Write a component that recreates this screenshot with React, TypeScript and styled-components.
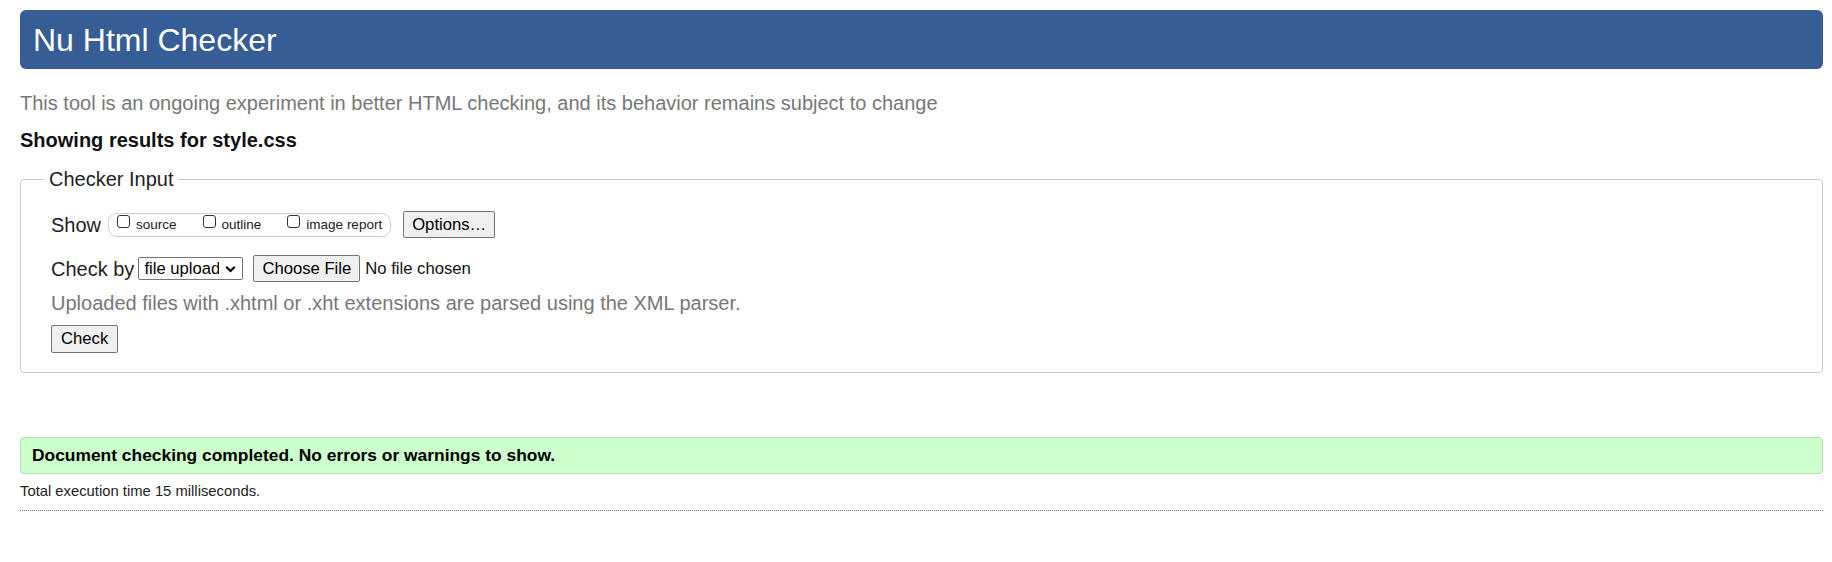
import React from "react";
import styled, { createGlobalStyle } from "styled-components";

const Global = createGlobalStyle`
  html, body { background: #fff; }
  body {
    margin: 10px 9px 0 20px;
    font-family: "Liberation Sans", Arial, sans-serif;
    color: #222;
  }
  * { box-sizing: border-box; }
`;

const Header = styled.h1`
  margin: 0;
  height: 59px;
  padding: 2px 13px 0;
  line-height: 57px;
  font-size: 32px;
  font-weight: 400;
  color: #fff;
  background: #365d95;
  border-radius: 6px;
`;

const Subtitle = styled.p`
  margin: 22px 0 0;
  font-size: 20px;
  line-height: 24px;
  color: #777;
`;

const Results = styled.h2`
  margin: 13px 0 0;
  font-size: 20px;
  line-height: 24px;
  font-weight: 700;
  color: #111;
`;

const Fieldset = styled.fieldset`
  margin: 15px 0 0;
  padding: 0 23px 19px;
  border: 1px solid #c8c8c8;
  border-radius: 4px;
`;

const Legend = styled.legend`
  padding: 0 4px 0 5px;
  font-size: 20px;
  line-height: 24px;
  color: #222;
`;

const Rows = styled.div`
  display: flex;
  flex-direction: column;
  align-items: flex-start;
  padding-left: 7px;
  padding-top: 20px;
`;

const Row = styled.div<{ $top?: number }>`
  display: flex;
  align-items: center;
  height: 27px;
  margin-top: ${(p) => p.$top ?? 0}px;
`;

const Label = styled.span<{ $gap: number }>`
  font-size: 20px;
  line-height: 24px;
  margin-right: ${(p) => p.$gap}px;
  color: #222;
`;

const ShowGroup = styled.div`
  display: inline-flex;
  align-items: center;
  gap: 26px;
  height: 24px;
  padding: 0 8px;
  border: 1px solid #cfcfcf;
  border-radius: 9px;
  margin-right: 12px;
`;

const CheckItem = styled.label`
  display: inline-flex;
  align-items: center;
  gap: 6px;
  font-size: 13.5px;
  line-height: 16px;
  color: #222;
`;

const Box = styled.input`
  appearance: none;
  width: 13px;
  height: 13px;
  margin: 0 0 6px;
  border: 1px solid #333;
  border-radius: 3px;
  background: #fff;
`;

const Button = styled.button`
  height: 27px;
  padding: 0 8px;
  font-family: "Liberation Sans", Arial, sans-serif;
  font-size: 16.67px;
  line-height: 20px;
  color: #000;
  background: #efefef;
  border: 1px solid #767676;
  border-radius: 2px;
`;

const SelectBox = styled.div`
  display: inline-flex;
  align-items: center;
  gap: 6px;
  width: 105px;
  height: 23px;
  padding: 0 6px 0 5px;
  border: 1px solid #767676;
  border-radius: 2px;
  background: #fff;
  margin-right: 10px;
`;

const Select = styled.select`
  appearance: none;
  border: 0;
  padding: 0;
  margin: 0;
  background: transparent;
  font-family: "Liberation Sans", Arial, sans-serif;
  font-size: 16.67px;
  line-height: 20px;
  color: #000;
  flex: 1;
  min-width: 0;
  outline: none;
`;

const FileName = styled.span`
  margin-left: 5px;
  font-size: 16.67px;
  line-height: 20px;
  color: #111;
`;

const Note = styled.p`
  margin: 9px 0 0;
  font-size: 20px;
  line-height: 24px;
  color: #777;
`;

const CheckButton = styled(Button)`
  height: 28px;
  margin-top: 10px;
  padding: 0 9px;
`;

const Success = styled.div`
  margin-top: 64px;
  padding: 7px 11px;
  font-size: 17.4px;
  line-height: 21px;
  font-weight: 700;
  color: #000;
  background: #ccffcc;
  border: 1px solid #bcd6bc;
  border-radius: 4px;
`;

const Timing = styled.p`
  margin: 8px 0 0;
  padding-bottom: 10px;
  font-size: 14.8px;
  line-height: 18px;
  color: #222;
  border-bottom: 1px dotted #777;
`;

const Chevron = () => (
  <svg width="11" height="8" viewBox="0 0 11 8" aria-hidden="true">
    <path d="M1.2 1.8 L5.5 6 L9.8 1.8" fill="none" stroke="#000" strokeWidth="2.1" />
  </svg>
);

export default function App() {
  return (
    <>
      <Global />
      <Header>Nu Html Checker</Header>
      <Subtitle>
        This tool is an ongoing experiment in better HTML checking, and its behavior remains subject to change
      </Subtitle>
      <Results>Showing results for style.css</Results>
      <Fieldset>
        <Legend>Checker Input</Legend>
        <Rows>
          <Row>
            <Label $gap={7}>Show</Label>
            <ShowGroup>
              <CheckItem>
                <Box type="checkbox" />
                source
              </CheckItem>
              <CheckItem>
                <Box type="checkbox" />
                outline
              </CheckItem>
              <CheckItem>
                <Box type="checkbox" />
                image report
              </CheckItem>
            </ShowGroup>
            <Button type="button">Options…</Button>
          </Row>
          <Row $top={17}>
            <Label $gap={4}>Check by</Label>
            <SelectBox>
              <Select defaultValue="file">
                <option value="file">file upload</option>
              </Select>
              <Chevron />
            </SelectBox>
            <Button type="button">Choose File</Button>
            <FileName>No file chosen</FileName>
          </Row>
          <Note>Uploaded files with .xhtml or .xht extensions are parsed using the XML parser.</Note>
          <CheckButton type="button">Check</CheckButton>
        </Rows>
      </Fieldset>
      <Success>Document checking completed. No errors or warnings to show.</Success>
      <Timing>Total execution time 15 milliseconds.</Timing>
    </>
  );
}
